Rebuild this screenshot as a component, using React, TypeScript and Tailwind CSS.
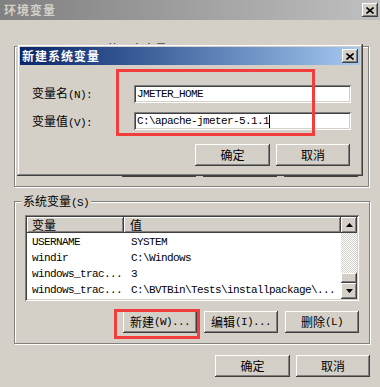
import type { ReactNode } from 'react';

const raised  = 'shadow-[inset_-1px_-1px_#404040,inset_1px_1px_#ffffff,inset_-2px_-2px_#808080,inset_2px_2px_#d4d0c8]';
const sunken  = 'shadow-[inset_1px_1px_#808080,inset_-1px_-1px_#ffffff,inset_2px_2px_#404040,inset_-2px_-2px_#d4d0c8]';
const windowFrame = 'shadow-[inset_-1px_-1px_#404040,inset_1px_1px_#d4d0c8,inset_-2px_-2px_#808080,inset_2px_2px_#ffffff]';

// SimSun look: CJK at 12px, ascii as half-width mono
const Mixed = ({ text }: { text: string }) => (
  <>
    {text.split(/([\x00-\x7f]+)/).filter(Boolean).map((part, i) =>
      /^[\x00-\x7f]+$/.test(part) ? (
        <span key={i} className="font-['Liberation_Mono',monospace] text-[11px] tracking-[-0.6px] whitespace-pre">
          {part}
        </span>
      ) : (
        <span key={i}>{part}</span>
      )
    )}
  </>
);

const Button = ({ label, className }: { label?: string; className: string }) => (
  <div className={`flex items-center justify-center h-[22px] bg-[#d4d0c8] text-black ${raised} ${className}`}>
    {label && <Mixed text={label} />}
  </div>
);

const CloseBox = ({ className = '' }: { className?: string }) => (
  <div className={`flex items-center justify-center w-[16px] h-[14px] bg-[#d4d0c8] ${raised} ${className}`}>
    <svg width="8" height="7" viewBox="0 0 8 7">
      <path d="M0.5 0.5 L7.5 6.5 M7.5 0.5 L0.5 6.5" stroke="#000" strokeWidth="1.6" />
    </svg>
  </div>
);

const Arrow = ({ up }: { up?: boolean }) => (
  <div className={`flex items-center justify-center w-[16px] h-[16px] bg-[#d4d0c8] ${raised}`}>
    <svg width="7" height="4" viewBox="0 0 7 4">
      <polygon points={up ? '3.5,0 7,4 0,4' : '0,0 7,0 3.5,4'} fill="#000" />
    </svg>
  </div>
);

const GroupBox = ({ label, className, labelClass = '-top-[9px]', children }: { label: string; className: string; labelClass?: string; children?: ReactNode }) => (
  <div className={`relative border border-[#808080] shadow-[1px_1px_0_#ffffff,inset_1px_1px_0_#ffffff] ${className}`}>
    <span className={`absolute left-[6px] px-[2px] bg-[#d4d0c8] leading-[16px] ${labelClass}`}>
      <Mixed text={label} />
    </span>
    {children}
  </div>
);

const rows = [
  ['USERNAME', 'SYSTEM'],
  ['windir', 'C:\\Windows'],
  ['windows_trac...', '3'],
  ['windows_trac...', 'C:\\BVTBin\\Tests\\installpackage\\...'],
];

export default function App() {
  return (
    <div className="relative w-[380px] h-[387px] overflow-hidden bg-[#d4d0c8] text-[12px] text-black font-['Noto_Sans_CJK_SC',sans-serif] flex flex-col">

      {/* ── Outer window title (inactive) ── */}
      <div className="flex items-center justify-between h-[20px] pl-[4px] pr-[2px] bg-gradient-to-r from-[#808080] to-[#c0c0c0]">
        <span className="font-bold text-[#d4d0c8] tracking-[1px]">环境变量</span>
        <CloseBox />
      </div>

      {/* ── User variables (mostly behind dialog) ── */}
      <GroupBox label="Administrator 的用户变量(U)" labelClass="-top-[6px]" className="mt-[26px] ml-[14px] mr-[11px] h-[141px]">
        <div className="flex justify-end gap-[7px] pr-[10px] mt-[108px]">
          <Button className="w-[74px]" />
          <Button className="w-[74px]" />
          <Button className="w-[74px]" />
        </div>
      </GroupBox>

      {/* ── System variables ── */}
      <GroupBox label="系统变量(S)" className="mt-[14px] ml-[14px] mr-[10px] h-[143px]">
        <div className={`mt-[13px] ml-[10px] mr-[10px] h-[86px] bg-white p-[2px] flex ${sunken}`}>
          <div className="flex-1 flex flex-col">
            <div className="flex h-[16px]">
              <div className={`w-[97px] h-full pl-[5px] leading-[16px] bg-[#d4d0c8] ${raised}`}>变量</div>
              <div className={`flex-1 h-full pl-[6px] leading-[16px] bg-[#d4d0c8] ${raised}`}>值</div>
            </div>
            {rows.map(([name, value], i) => (
              <div key={i} className="flex h-[16px] items-center">
                <div className="w-[97px] pl-[5px]"><Mixed text={name} /></div>
                <div className="flex-1 pl-[7px]"><Mixed text={value} /></div>
              </div>
            ))}
          </div>
          <div className="w-[16px] flex flex-col">
            <Arrow up />
            <div className="flex-1 bg-[image:repeating-conic-gradient(#ffffff_0%_25%,#d4d0c8_0%_50%)] bg-[length:2px_2px]" />
            <div className={`h-[10px] bg-[#d4d0c8] ${raised}`} />
            <Arrow />
          </div>
        </div>
        <div className="flex justify-end gap-[7px] pr-[10px] mt-[10px]">
          <Button label="新建(W)..." className="w-[74px]" />
          <Button label="编辑(I)..." className="w-[74px]" />
          <Button label="删除(L)" className="w-[74px]" />
        </div>
      </GroupBox>

      {/* ── Bottom buttons ── */}
      <div className="flex justify-end gap-[6px] pr-[10px] mt-[11px]">
        <Button label="确定" className="w-[75px]" />
        <Button label="取消" className="w-[74px]" />
      </div>

      {/* ── Dialog: 新建系统变量 ── */}
      <div className={`absolute left-[17px] top-[44px] w-[346px] h-[132px] bg-[#d4d0c8] p-[3px] flex flex-col ${windowFrame}`}>
        <div className="flex items-center justify-between h-[18px] pl-[2px] pr-[2px] bg-gradient-to-r from-[#0a246a] to-[#a6caf0]">
          <span className="font-bold text-white tracking-[1px]">新建系统变量</span>
          <CloseBox />
        </div>
        <div className="flex items-center mt-[19px] pl-[12px] pr-[9px]">
          <span className="w-[102px]"><Mixed text="变量名(N):" /></span>
          <div className={`flex-1 h-[18px] bg-white pl-[3px] flex items-center ${sunken}`}>
            <Mixed text="JMETER_HOME" />
          </div>
        </div>
        <div className="flex items-center mt-[8px] pl-[12px] pr-[9px]">
          <span className="w-[102px]"><Mixed text="变量值(V):" /></span>
          <div className={`flex-1 h-[18px] bg-white pl-[3px] flex items-center ${sunken}`}>
            <Mixed text="C:\apache-jmeter-5.1.1" />
            <span className="w-px h-[13px] bg-black" />
          </div>
        </div>
        <div className="flex justify-end gap-[6px] pr-[10px] mt-[13px]">
          <Button label="确定" className="w-[75px]" />
          <Button label="取消" className="w-[74px]" />
        </div>
      </div>

      {/* ── Red annotation boxes ── */}
      <div className="absolute left-[116px] top-[69px] w-[199px] h-[67px] border-[3px] border-[#f23d3d]" />
      <div className="absolute left-[114px] top-[309px] w-[86px] h-[30px] border-[3px] border-[#f23d3d]" />
    </div>
  );
}
